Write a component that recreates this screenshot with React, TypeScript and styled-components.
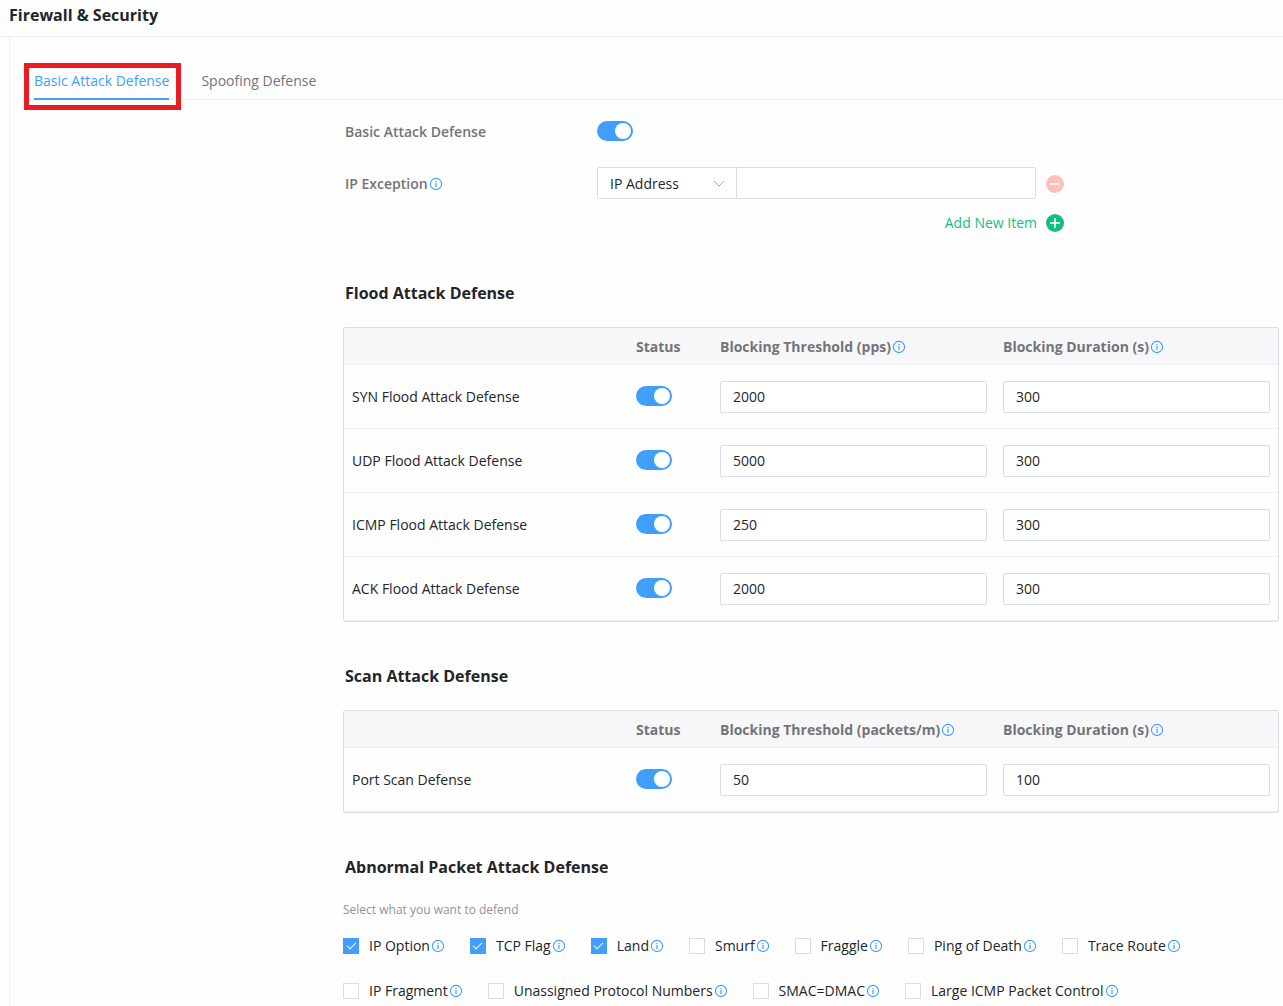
import React, { useState } from 'react';
import styled, { createGlobalStyle } from 'styled-components';

const c = {
  text: '#232529',
  label: '#737478',
  hint: '#929397',
  blue: '#409eff',
  green: '#15bd83',
  red: '#fbc0b9',
  mark: '#e81c23',
  border: '#dcdce2',
  line: '#efeff3',
  head: '#f7f7fa',
};

const GlobalStyle = createGlobalStyle`
  *, *::before, *::after { box-sizing: border-box; }
  body {
    margin: 0;
    background: #fefefe;
    color: ${c.text};
    font: 14px/22px 'Open Sans', 'Noto Sans', sans-serif;
  }
  button, input, select { font: inherit; color: inherit; }
`;

const PageHeader = styled.header`
  padding: 0 9px 6px;
  border-bottom: 1px solid ${c.line};
`;

const PageTitle = styled.h1`
  margin: 0;
  font-size: 16px;
  line-height: 30px;
  font-weight: 700;
`;

const Panel = styled.main`
  margin-left: 9px;
  padding-top: 26px;
  border-left: 1px solid ${c.line};
`;

const Tabs = styled.nav`
  display: flex;
  gap: 32px;
  margin-left: 24px;
  border-bottom: 1px solid ${c.line};
`;

const TabSlot = styled.div`
  position: relative;
  margin-bottom: -1px;
`;

const Tab = styled.button<{ $active?: boolean }>`
  display: block;
  padding: 7px 0 6px;
  border: 0;
  border-bottom: 2px solid ${(p) => (p.$active ? c.blue : 'transparent')};
  background: none;
  color: ${(p) => (p.$active ? c.blue : c.label)};
  cursor: pointer;
`;

const Highlight = styled.span`
  position: absolute;
  inset: 0 -12px -10px -10px;
  border: 5px solid ${c.mark};
  pointer-events: none;
`;

const Content = styled.div`
  padding: 15px 4px 4px 333px;
`;

const Form = styled.div`
  display: flex;
  flex-direction: column;
  gap: 20px;
  padding-left: 2px;
`;

const FormRow = styled.div`
  display: grid;
  grid-template-columns: 252px 1fr;
`;

const FormLabel = styled.label`
  display: flex;
  align-items: center;
  gap: 1px;
  height: 34px;
  margin-bottom: -2px;
  color: ${c.label};
  font-weight: 600;
`;

const FormField = styled.div`
  display: flex;
  flex-direction: column;
  justify-content: center;
  gap: 8px;
  max-width: 467px;
`;

const ExceptionRow = styled.div`
  display: flex;
  align-items: center;
`;

const SelectBox = styled.div`
  display: grid;
  flex: 0 0 140px;
  align-items: center;

  > * { grid-area: 1 / 1; }
  > svg { justify-self: end; margin-right: 11px; pointer-events: none; }
`;

const Select = styled.select`
  appearance: none;
  width: 100%;
  height: 32px;
  padding: 1px 12px 0;
  border: 1px solid ${c.border};
  border-radius: 2px 0 0 2px;
  background: #fff;
`;

const TextInput = styled.input<{ $joined?: boolean }>`
  display: block;
  width: 100%;
  min-width: 0;
  height: 32px;
  padding: 0 12px;
  border: 1px solid ${c.border};
  border-radius: ${(p) => (p.$joined ? '0 2px 2px 0' : '2px')};
  margin-left: ${(p) => (p.$joined ? '-1px' : '0')};
  background: #fff;
  outline-color: ${c.blue};
`;

const IconButton = styled.button`
  display: flex;
  margin-left: 10px;
  padding: 2px 0 0;
  border: 0;
  background: none;
  cursor: pointer;
`;

const AddButton = styled.button`
  display: flex;
  align-items: center;
  align-self: flex-end;
  gap: 9px;
  height: 32px;
  padding: 0;
  border: 0;
  background: none;
  color: ${c.green};
  cursor: pointer;
`;

const Switch = styled.input`
  appearance: none;
  display: block;
  width: 36px;
  height: 20px;
  margin: 0;
  padding: 2px;
  border-radius: 10px;
  background: #c8c9cc;
  cursor: pointer;

  &::before {
    content: '';
    display: block;
    width: 16px;
    height: 16px;
    border-radius: 50%;
    background: #fff;
  }
  &:checked { background: ${c.blue}; }
  &:checked::before { margin-left: auto; }
`;

const Section = styled.section`
  margin-top: 42px;
`;

const SectionTitle = styled.h2`
  margin: 0 0 22px;
  padding-left: 2px;
  font-size: 16px;
  line-height: 24px;
  font-weight: 700;
`;

const Table = styled.table`
  width: 100%;
  table-layout: fixed;
  border: 1px solid ${c.border};
  border-radius: 2px;
  border-spacing: 0;
`;

const NameCol = styled.col`
  width: 284px;
`;

const StatusCol = styled.col`
  width: 84px;
`;

const HeadCell = styled.th`
  height: 37px;
  padding: 2px 8px 0;
  border-bottom: 1px solid ${c.line};
  background: ${c.head};
  color: ${c.label};
  font-weight: 700;
  text-align: left;
`;

const HeadLabel = styled.span`
  display: flex;
  align-items: center;
  gap: 1px;
`;

const Cell = styled.td`
  height: 64px;
  padding: 0 8px;
  border-bottom: 1px solid ${c.line};
`;

const StatusCell = styled(Cell)`
  padding-bottom: 2px;
`;

const NameCell = styled(Cell).attrs({ as: 'th', scope: 'row' })`
  font-weight: 400;
  text-align: left;
`;

const Hint = styled.p`
  margin: 0 0 16px;
  color: ${c.hint};
  font-size: 12px;
  line-height: 18px;
`;

const CheckList = styled.div`
  display: flex;
  flex-wrap: wrap;
  gap: 23px 25px;
`;

const CheckItem = styled.div`
  display: flex;
  align-items: center;
  gap: 1px;
`;

const CheckLabel = styled.label`
  display: flex;
  align-items: center;
  gap: 10px;
  cursor: pointer;
`;

const CheckBox = styled.input`
  appearance: none;
  display: grid;
  place-items: center;
  width: 16px;
  height: 16px;
  margin: 0;
  border: 1px solid ${c.border};
  background: #fff;

  &:checked { border-color: ${c.blue}; background: ${c.blue}; }
  &:checked::before {
    content: '';
    width: 9px;
    height: 5px;
    margin-bottom: 3px;
    border: solid #fff;
    border-width: 0 0 1px 1px;
    transform: rotate(-45deg);
  }
`;

const InfoSvg = styled.svg`
  flex: none;
  display: block;
`;

const Info = () => (
  <InfoSvg width="14" height="14" viewBox="0 0 14 14" fill="none" stroke={c.blue} aria-hidden="true">
    <circle cx="7" cy="7" r="5.6" strokeWidth="1.1" />
    <path d="M7 6v4M7 4v1.2" strokeWidth="1.2" />
  </InfoSvg>
);

const Chevron = () => (
  <svg width="14" height="14" viewBox="0 0 14 14" fill="none" stroke="#a3a5aa" aria-hidden="true">
    <path d="M2 5l5 5 5-5" />
  </svg>
);

const RoundSign = ({ fill, plus }: { fill: string; plus?: boolean }) => (
  <svg width="18" height="18" viewBox="0 0 18 18" stroke="#fff" strokeWidth="1.5" aria-hidden="true">
    <circle cx="9" cy="9" r="9" fill={fill} stroke="none" />
    <path d={plus ? 'M4 9h10M9 4v10' : 'M4 9h10'} />
  </svg>
);

type Rule = { name: string; threshold: string; duration: string };

const floodRules: Rule[] = [
  { name: 'SYN Flood Attack Defense', threshold: '2000', duration: '300' },
  { name: 'UDP Flood Attack Defense', threshold: '5000', duration: '300' },
  { name: 'ICMP Flood Attack Defense', threshold: '250', duration: '300' },
  { name: 'ACK Flood Attack Defense', threshold: '2000', duration: '300' },
];

const scanRules: Rule[] = [{ name: 'Port Scan Defense', threshold: '50', duration: '100' }];

const packetChecks = [
  { name: 'IP Option', on: true },
  { name: 'TCP Flag', on: true },
  { name: 'Land', on: true },
  { name: 'Smurf' },
  { name: 'Fraggle' },
  { name: 'Ping of Death' },
  { name: 'Trace Route' },
  { name: 'IP Fragment' },
  { name: 'Unassigned Protocol Numbers' },
  { name: 'SMAC=DMAC' },
  { name: 'Large ICMP Packet Control' },
];

const RuleTable = ({ unit, rules }: { unit: string; rules: Rule[] }) => (
  <Table>
    <colgroup>
      <NameCol />
      <StatusCol />
      <col />
      <col />
    </colgroup>
    <thead>
      <tr>
        <HeadCell />
        <HeadCell scope="col">Status</HeadCell>
        <HeadCell scope="col">
          <HeadLabel>Blocking Threshold ({unit})<Info /></HeadLabel>
        </HeadCell>
        <HeadCell scope="col">
          <HeadLabel>Blocking Duration (s)<Info /></HeadLabel>
        </HeadCell>
      </tr>
    </thead>
    <tbody>
      {rules.map((r) => (
        <tr key={r.name}>
          <NameCell>{r.name}</NameCell>
          <StatusCell><Switch type="checkbox" role="switch" defaultChecked aria-label={r.name} /></StatusCell>
          <Cell><TextInput defaultValue={r.threshold} aria-label={`${r.name} threshold`} /></Cell>
          <Cell><TextInput defaultValue={r.duration} aria-label={`${r.name} duration`} /></Cell>
        </tr>
      ))}
    </tbody>
  </Table>
);

export default function App() {
  const [exceptions, setExceptions] = useState([0]);

  return (
    <>
      <GlobalStyle />
      <PageHeader>
        <PageTitle>Firewall &amp; Security</PageTitle>
      </PageHeader>
      <Panel>
        <Tabs>
          <TabSlot>
            <Tab $active type="button">Basic Attack Defense</Tab>
            <Highlight />
          </TabSlot>
          <TabSlot>
            <Tab type="button">Spoofing Defense</Tab>
          </TabSlot>
        </Tabs>
        <Content>
          <Form>
            <FormRow>
              <FormLabel htmlFor="basic">Basic Attack Defense</FormLabel>
              <FormField>
                <Switch id="basic" type="checkbox" role="switch" defaultChecked />
              </FormField>
            </FormRow>
            <FormRow>
              <FormLabel htmlFor="exception-0">IP Exception<Info /></FormLabel>
              <FormField>
                {exceptions.map((id) => (
                  <ExceptionRow key={id}>
                    <SelectBox>
                      <Select aria-label="Exception type">
                        <option>IP Address</option>
                      </Select>
                      <Chevron />
                    </SelectBox>
                    <TextInput $joined id={`exception-${id}`} aria-label="IP Exception" />
                    <IconButton
                      type="button"
                      aria-label="Remove item"
                      onClick={() => setExceptions((l) => (l.length > 1 ? l.filter((x) => x !== id) : l))}
                    >
                      <RoundSign fill={c.red} />
                    </IconButton>
                  </ExceptionRow>
                ))}
                <AddButton type="button" onClick={() => setExceptions((l) => [...l, Math.max(...l) + 1])}>
                  Add New Item
                  <RoundSign fill={c.green} plus />
                </AddButton>
              </FormField>
            </FormRow>
          </Form>
          <Section>
            <SectionTitle>Flood Attack Defense</SectionTitle>
            <RuleTable unit="pps" rules={floodRules} />
          </Section>
          <Section>
            <SectionTitle>Scan Attack Defense</SectionTitle>
            <RuleTable unit="packets/m" rules={scanRules} />
          </Section>
          <Section>
            <SectionTitle>Abnormal Packet Attack Defense</SectionTitle>
            <Hint>Select what you want to defend</Hint>
            <CheckList>
              {packetChecks.map((k) => (
                <CheckItem key={k.name}>
                  <CheckLabel>
                    <CheckBox type="checkbox" defaultChecked={k.on} />
                    {k.name}
                  </CheckLabel>
                  <Info />
                </CheckItem>
              ))}
            </CheckList>
          </Section>
        </Content>
      </Panel>
    </>
  );
}
